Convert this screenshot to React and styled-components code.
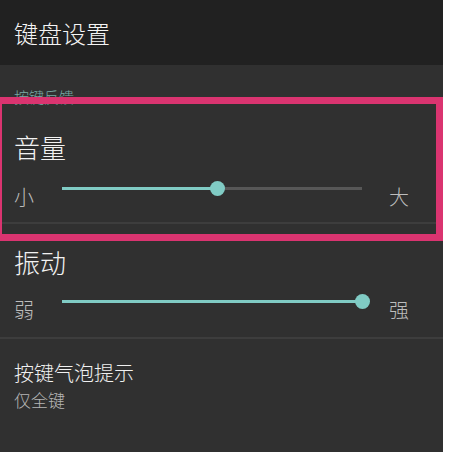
import React from 'react';
import styled, { createGlobalStyle } from 'styled-components';

const GlobalStyle = createGlobalStyle`
  html, body {
    margin: 0;
    padding: 0;
    background: #ffffff;
  }
`;

const Screen = styled.div`
  position: relative;
  width: 443px;
  height: 452px;
  background: #303030;
  font-family: "Noto Sans CJK SC", "Noto Sans", sans-serif;
  font-weight: 300;
  overflow: hidden;
`;

const Toolbar = styled.div`
  height: 65px;
  background: #212121;
  display: flex;
  align-items: center;
  padding-left: 14px;
  color: #f5f5f5;
  font-size: 24px;
`;

const Category = styled.div`
  padding: 22px 0 0 14px;
  font-size: 15px;
  line-height: 20px;
  color: #79aaa5;
`;

const Section = styled.div`
  padding-top: ${p => p.top}px;
`;

const Title = styled.div`
  padding-left: 14px;
  font-size: 26px;
  line-height: 34px;
  color: #f2f2f2;
`;

const SliderRow = styled.div`
  display: flex;
  align-items: flex-start;
  padding-left: 14px;
  margin-top: ${p => p.top}px;
  height: 22px;
`;

const EndLabel = styled.span`
  width: 22px;
  font-size: 20px;
  line-height: 22px;
  color: #bdbdbd;
`;

const Track = styled.div`
  position: relative;
  width: 300px;
  height: 3px;
  margin: 1px 27px 0 26px;
  background: #575757;
`;

const Fill = styled.div`
  height: 3px;
  background: #80cbc4;
`;

const Thumb = styled.div`
  position: absolute;
  top: 50%;
  width: 15px;
  height: 15px;
  margin: -7.5px 0 0 -7.5px;
  border-radius: 50%;
  background: #80cbc4;
`;

const Divider = styled.div`
  height: 2px;
  margin-top: ${p => p.top}px;
  background: #3d3d3d;
`;

const ItemTitle = styled.div`
  padding: 21px 0 0 14px;
  font-size: 20px;
  line-height: 26px;
  color: #f0f0f0;
`;

const ItemSummary = styled.div`
  padding: 3px 0 0 14px;
  font-size: 17px;
  line-height: 22px;
  color: #b5b5b5;
`;

const Highlight = styled.div`
  position: absolute;
  left: 0;
  top: 97px;
  width: 443px;
  height: 144px;
  box-sizing: border-box;
  border: 7px solid #da3470;
  border-left-width: 2px;
  pointer-events: none;
`;

function Slider({ value }) {
  const pct = `${value * 100}%`;
  return (
    <Track>
      <Fill style={{ width: pct }} />
      <Thumb style={{ left: pct }} />
    </Track>
  );
}

export default function App() {
  return (
    <Screen>
      <GlobalStyle />
      <Toolbar>键盘设置</Toolbar>
      <Category>按键反馈</Category>

      <Section top={23}>
        <Title>音量</Title>
        <SliderRow top={22}>
          <EndLabel>小</EndLabel>
          <Slider value={0.517} />
          <EndLabel>大</EndLabel>
        </SliderRow>
        <Divider top={14} />
      </Section>

      <Section top={21}>
        <Title>振动</Title>
        <SliderRow top={20}>
          <EndLabel>弱</EndLabel>
          <Slider value={1} />
          <EndLabel>强</EndLabel>
        </SliderRow>
        <Divider top={16} />
      </Section>

      <ItemTitle>按键气泡提示</ItemTitle>
      <ItemSummary>仅全键</ItemSummary>

      <Highlight />
    </Screen>
  );
}
